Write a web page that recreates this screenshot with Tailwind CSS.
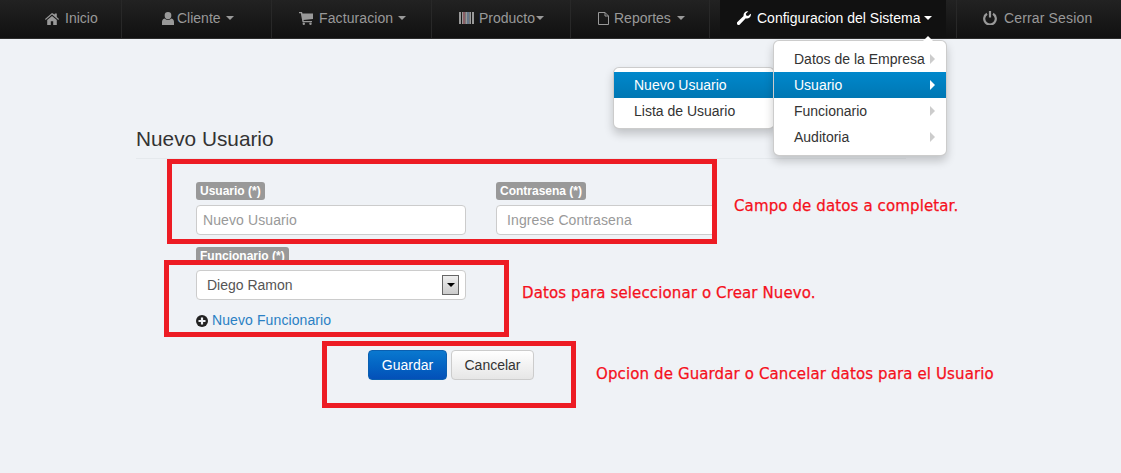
<!DOCTYPE html>
<html lang="es">
<head>
<meta charset="utf-8">
<title>Nuevo Usuario</title>
<script src="https://cdn.jsdelivr.net/npm/@tailwindcss/browser@4"></script>
</head>
<body class="relative h-[473px] w-[1121px] overflow-hidden bg-[#eff2f6] font-['Liberation_Sans',Arial,sans-serif] text-sm text-[#333]">

<nav class="flex h-[39px] border-b border-[#2c2c2c] bg-gradient-to-b from-[#222222] to-[#111111] text-sm text-[#999]">
  <a class="flex w-[122px] items-center gap-[6px] border-r border-[#282828] pb-[2px] pl-[45px]">
    <svg class="h-[13px] w-[14px]" viewBox="0 0 14 13" fill="#999"><path d="M7 1 0 7l.7.9L7 2.6l6.3 5.3.7-.9-2.2-1.9V1.500h-2v1.100zM2.200 8v5h3.600V9.200h2.400V13h3.600V8L7 4z"/></svg>
    <span>Inicio</span>
  </a>
  <a class="flex w-[150px] items-center border-r border-[#282828] pb-[2px] pl-[40px]">
    <svg class="mr-[3px] h-[13px] w-[12px]" viewBox="0 0 12 13" fill="#999"><path d="M6 0a3.300 3.300 0 0 1 3.300 3.500A3.300 3.300 0 0 1 6 7a3.300 3.300 0 0 1-3.300-3.500A3.300 3.300 0 0 1 6 0zM2.500 6.500 4.500 7.800h3L9.500 6.500Q12 7 12 10v3H0v-3q0-3 2.500-3.500z"/></svg>
    <span>Cliente</span>
    <span class="ml-[5px] h-0 w-0 border-x-[4px] border-t-[4px] border-x-transparent border-t-[#999]"></span>
  </a>
  <a class="flex w-[160px] items-center border-r border-[#282828] pb-[2px] pl-[27px]">
    <svg class="mr-[6px] h-[13px] w-[14px]" viewBox="0 0 14 13" fill="#999"><path d="M0 0h3l.5 1.500H14v5.500L4.500 8l.3 1H13v1.300H3.500L1.800 1.300H0z"/><circle cx="4.800" cy="11.800" r="1.200"/><circle cx="11.500" cy="11.800" r="1.200"/></svg>
    <span class="tracking-[0.1px]">Facturacion</span>
    <span class="ml-[5px] h-0 w-0 border-x-[4px] border-t-[4px] border-x-transparent border-t-[#999]"></span>
  </a>
  <a class="flex w-[139px] items-center border-r border-[#282828] pb-[2px] pl-[27px]">
    <svg class="mr-[5px] h-[12px] w-[15px]" viewBox="0 0 15 12"><path fill="#999" d="M0 0h2v12H0zM3 0h1v12H3zM7 0h1v12H7zM11 0h1v12h-1zM13 0h2v12h-2z"/><path fill="#8a5f66" d="M4 0h2v12H4z"/><path fill="#66778a" d="M8 0h2v12H8z"/><path fill="#777" d="M6 0h1v12H6zM10 0h1v12h-1z"/></svg>
    <span>Producto</span>
    <span class="ml-[1px] h-0 w-0 border-x-[4px] border-t-[4px] border-x-transparent border-t-[#999]"></span>
  </a>
  <a class="flex w-[139px] items-center border-r border-[#282828] pb-[2px] pl-[27px]">
    <svg class="mr-[5px] h-[13px] w-[11px]" viewBox="0 0 11 13" fill="none" stroke="#999"><path d="M.5.500h6.500l3.500 3.500v8.500H.5zM7 .5v3.500h3.500"/></svg>
    <span>Reportes</span>
    <span class="ml-[6px] h-0 w-0 border-x-[4px] border-t-[4px] border-x-transparent border-t-[#999]"></span>
  </a>
  <div class="w-[10px]"></div>
  <a class="flex w-[226px] items-center bg-[#111] pb-[2px] pl-[17px] text-white">
    <svg class="mr-[6px] h-[14px] w-[14px]" viewBox="0 0 14 14" fill="#fff"><path d="M14 3.500a4 4 0 0 1-5.200 3.800L2.800 13.400a1.800 1.800 0 0 1-2.400 0 1.800 1.800 0 0 1 0-2.500L6.600 5A4 4 0 0 1 11.300.3L8.800 2.700l.4 1.900 1.900.5L13.600 2.700Q14 3 14 3.500z"/></svg>
    <span>Configuracion del Sistema</span>
    <span class="ml-[4px] h-0 w-0 border-x-[4px] border-t-[4px] border-x-transparent border-t-white"></span>
  </a>
  <div class="w-[11px] border-r border-[#282828]"></div>
  <a class="flex flex-1 items-center pb-[2px] pl-[26px]">
    <svg class="mr-[7px] h-[14px] w-[14px]" viewBox="0 0 14 14" fill="none" stroke="#999" stroke-width="2.200"><path d="M4 2.800a5.800 5.800 0 1 0 6 0M7 0v6.500"/></svg>
    <span class="tracking-[0.15px]">Cerrar Sesion</span>
  </a>
</nav>

<main class="ml-[136px] w-[770px] pt-[79px]">
  <h3 class="h-[41px] border-b border-[#e5e9ed] text-[20.8px] leading-[42px] text-[#333]">Nuevo Usuario</h3>
  <form class="ml-[60px] pt-[23px]">
    <div class="flex gap-[30px]">
      <div class="w-[270px]">
        <label class="block w-fit rounded-[3px] bg-[#999] px-1 text-xs leading-[18px] font-bold text-white">Usuario (*)</label>
        <input class="mt-[5px] h-[30px] w-full rounded-[4px] border border-[#ccc] bg-white px-[6px] text-sm tracking-[0.1px] outline-none placeholder:text-[#999]" placeholder="Nuevo Usuario">
      </div>
      <div class="w-[220px]">
        <label class="block w-fit rounded-[3px] bg-[#999] px-1 text-xs leading-[18px] font-bold text-white">Contrasena (*)</label>
        <input class="mt-[5px] h-[30px] w-full rounded-l-[4px] border border-[#ccc] bg-white px-[10px] text-sm tracking-[0.1px] outline-none placeholder:text-[#999]" placeholder="Ingrese Contrasena">
      </div>
    </div>
    <div class="mt-[12px] w-[270px]">
      <label class="block w-fit rounded-[3px] bg-[#999] px-1 text-xs leading-[18px] font-bold text-white">Funcionario (*)</label>
      <div class="relative mt-[5px]">
        <select class="h-[30px] w-full appearance-none rounded-[4px] border border-[#ccc] bg-white px-[10px] text-sm text-[#555] outline-none"><option>Diego Ramon</option></select>
        <div class="absolute top-[5px] right-[7px] flex h-[20px] w-[17px] items-center justify-center border border-[#666] bg-gradient-to-b from-[#eee] to-[#ccc]">
          <span class="h-0 w-0 border-x-[4px] border-t-[4px] border-x-transparent border-t-black"></span>
        </div>
      </div>
      <a class="mt-[12px] flex items-center gap-[4px] text-sm leading-[17px] tracking-[0.1px] text-[#2a80c4]">
        <svg class="h-[12px] w-[12px]" viewBox="0 0 12 12"><circle cx="6" cy="6" r="6" fill="#222"/><path d="M2.500 6h7M6 2.500v7" stroke="#eff2f6" stroke-width="2.200"/></svg>
        Nuevo Funcionario
      </a>
    </div>
    <div class="mt-[21px] ml-[172px] flex gap-[4px]">
      <button type="button" class="h-[30px] w-[79px] rounded-[4px] border border-[#0a5fb0] bg-gradient-to-b from-[#0a78cf] to-[#0450b8] text-sm text-white">Guardar</button>
      <button type="button" class="h-[30px] w-[83px] rounded-[4px] border border-[#ccc] bg-gradient-to-b from-[#ffffff] to-[#e6e6e6] text-sm text-[#333]">Cancelar</button>
    </div>
  </form>
</main>

<!-- dropdown menus -->
<div class="absolute top-[67px] left-[613px] w-[162px] rounded-[6px] border border-black/20 bg-white py-[4px] shadow-[0_5px_10px_rgba(0,0,0,0.2)]">
  <div class="bg-gradient-to-b from-[#0088cc] to-[#0077b3] pl-[20px] text-sm leading-[26px] text-white">Nuevo Usuario</div>
  <div class="pl-[20px] text-sm leading-[26px] text-[#333]">Lista de Usuario</div>
</div>
<div class="absolute top-[40px] left-[773px] w-[174px] rounded-[6px] border border-black/20 bg-white py-[5px] shadow-[0_5px_10px_rgba(0,0,0,0.2)]">
  <span class="absolute -top-[5px] left-[148px] h-0 w-0 border-x-[6px] border-b-[6px] border-x-transparent border-b-white"></span>
  <div class="flex items-center justify-between pr-[11px] pl-[20px] text-sm leading-[26px] text-[#333]">Datos de la Empresa<span class="h-0 w-0 border-y-[5px] border-l-[5px] border-y-transparent border-l-[#ccc]"></span></div>
  <div class="flex items-center justify-between bg-gradient-to-b from-[#0088cc] to-[#0077b3] pr-[11px] pl-[20px] text-sm leading-[26px] text-white">Usuario<span class="h-0 w-0 border-y-[5px] border-l-[5px] border-y-transparent border-l-white"></span></div>
  <div class="flex items-center justify-between pr-[11px] pl-[20px] text-sm leading-[26px] text-[#333]">Funcionario<span class="h-0 w-0 border-y-[5px] border-l-[5px] border-y-transparent border-l-[#ccc]"></span></div>
  <div class="flex items-center justify-between pr-[11px] pl-[20px] text-sm leading-[26px] text-[#333]">Auditoria<span class="h-0 w-0 border-y-[5px] border-l-[5px] border-y-transparent border-l-[#ccc]"></span></div>
</div>

<!-- red annotation boxes painted over the screenshot -->
<div class="absolute top-[159px] left-[167px] h-[85px] w-[550px] border-[5px] border-[#ed1c24]"></div>
<div class="absolute top-[260px] left-[164px] h-[77px] w-[345px] border-[5px] border-[#ed1c24]"></div>
<div class="absolute top-[341px] left-[322px] h-[67px] w-[254px] border-[5px] border-[#ed1c24]"></div>

<p class="absolute top-[197px] left-[734px] font-['DejaVu_Sans',sans-serif] text-[15px] leading-[18px] tracking-[0.12px] whitespace-nowrap text-[#f5101c] [-webkit-text-stroke:0.25px_#f5101c]">Campo de datos a completar.</p>
<p class="absolute top-[284px] left-[522px] font-['DejaVu_Sans',sans-serif] text-[15px] leading-[18px] tracking-[0.12px] whitespace-nowrap text-[#f5101c] [-webkit-text-stroke:0.25px_#f5101c]">Datos para seleccionar o Crear Nuevo.</p>
<p class="absolute top-[365px] left-[596px] font-['DejaVu_Sans',sans-serif] text-[15px] leading-[18px] tracking-[0.12px] whitespace-nowrap text-[#f5101c] [-webkit-text-stroke:0.25px_#f5101c]">Opcion de Guardar o Cancelar datos para el Usuario</p>

</body>
</html>
